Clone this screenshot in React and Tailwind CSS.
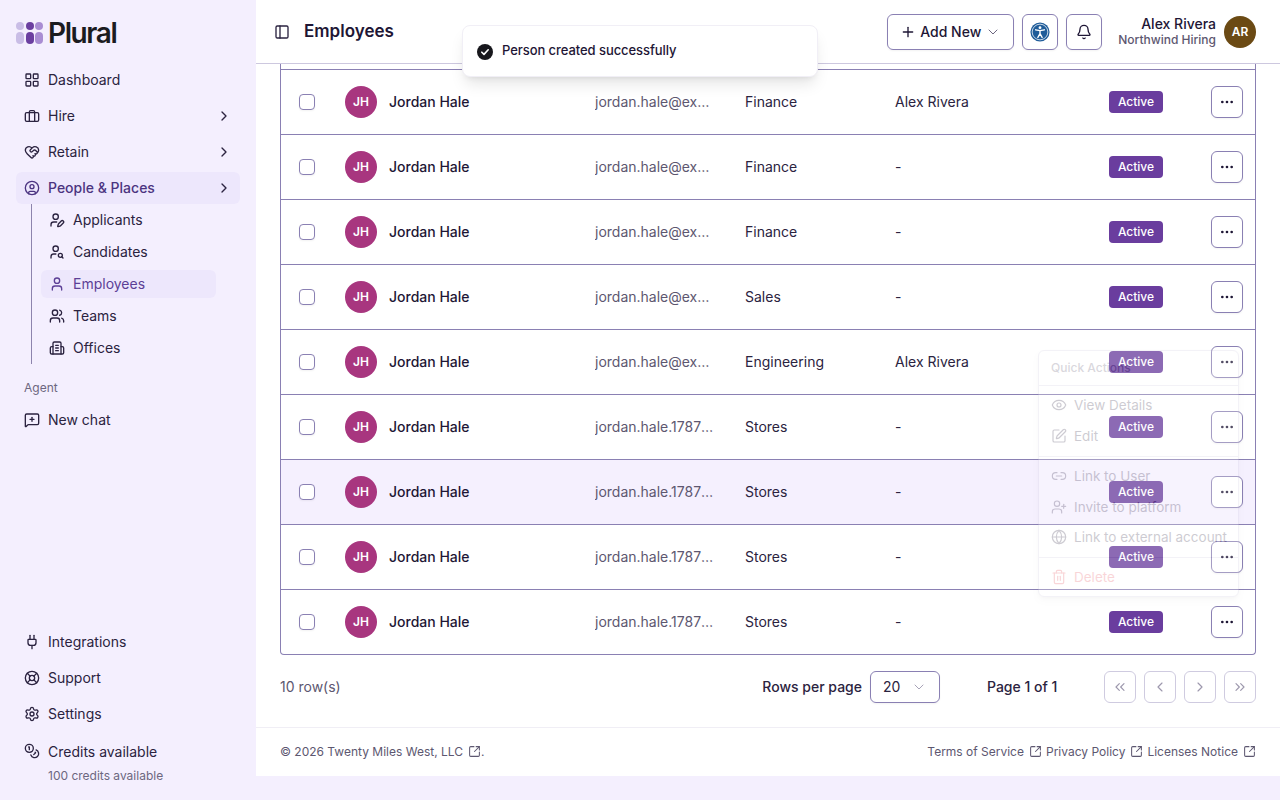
import React from "react";
import {
  LayoutGrid, HeartHandshake, CircleUser, ChevronRight, ChevronLeft, ChevronsLeft, ChevronsRight, UserPen, UserSearch, User, Users,
  MessageSquarePlus, Plug, LifeBuoy, Settings, PanelLeft, Plus, ChevronDown, Bell, Ellipsis, SquareArrowOutUpRight,
  Eye, SquarePen, Link2, UserPlus, Globe, Trash2, Coins,
} from "lucide-react";

const Suitcase = (p) => (
  <svg viewBox="0 0 24 24" fill="none" stroke="currentColor" strokeWidth="2" strokeLinecap="round" strokeLinejoin="round" {...p}>
    <path d="M16 20V6a2 2 0 0 0-2-2h-4a2 2 0 0 0-2 2v14" />
    <rect x="2" y="7" width="20" height="13" rx="2" />
  </svg>
);
const OfficeIcon = (p) => (
  <svg viewBox="0 0 24 24" fill="none" stroke="currentColor" strokeWidth="2" strokeLinecap="round" strokeLinejoin="round" {...p}>
    <path d="M6 21V5a2 2 0 0 1 2-2h8a2 2 0 0 1 2 2v16" />
    <path d="M6 10H4a2 2 0 0 0-2 2v7a2 2 0 0 0 2 2h16a2 2 0 0 0 2-2v-7a2 2 0 0 0-2-2h-2" />
    <path d="M10 8h4M10 12h4M10 16h4" />
  </svg>
);

const Logo = () => (
  <div className="flex items-center h-7 gap-[1.5px]">
    <div className="flex flex-col items-center gap-[2px]">
      <span className="w-2 h-2 rounded-full bg-[#c9bde6]" />
      <span className="w-2 h-3 rounded-full bg-[#c9bde6]" />
    </div>
    <div className="flex flex-col items-center gap-[2px]">
      <span className="w-2 h-2 rounded-full bg-[#6b3fa0]" />
      <span className="w-2 h-3 rounded-full bg-[#6b3fa0]" />
    </div>
    <div className="flex flex-col items-center gap-[2px]">
      <span className="w-2 h-2 rounded-full bg-[#a98dd3]" />
      <span className="w-2 h-3 rounded-full bg-[#a98dd3]" />
    </div>
    <span className="ml-[3.5px] text-[28px] leading-none font-semibold tracking-[-0.05em] text-[#1b1b1f]">Plural</span>
  </div>
);

const NavItem = ({ icon: I, label, chevron, active }) => (
  <div className={`flex items-center h-8 px-2 gap-2 rounded-md text-sm ${active ? "bg-[#ede7fc] text-[#4b3480] font-medium" : "text-[#2b2340]"}`}>
    <I className="w-4 h-4 shrink-0" strokeWidth={2} />
    <span className="flex-1">{label}</span>
    {chevron && <ChevronRight className="w-4 h-4 text-[#2b2340]" />}
  </div>
);

const SubItem = ({ icon: I, label, active }) => (
  <div className={`flex items-center h-7 px-2 gap-2 rounded-md text-sm ${active ? "bg-[#ede7fc] text-[#5c3f96]" : "text-[#2b2340]"}`}>
    <I className="w-4 h-4 shrink-0" strokeWidth={2} />
    <span>{label}</span>
  </div>
);

const Sidebar = () => (
  <aside className="w-64 h-[800px] shrink-0 bg-[#f4effe] flex flex-col px-4 pt-[19px]">
    <Logo />
    <nav className="mt-[17px] flex flex-col gap-1">
      <NavItem icon={LayoutGrid} label="Dashboard" />
      <NavItem icon={Suitcase} label="Hire" chevron />
      <NavItem icon={HeartHandshake} label="Retain" chevron />
      <NavItem icon={CircleUser} label="People & Places" chevron active />
    </nav>
    <div className="ml-[15px] mr-6 border-l border-[#8d84ad] pl-[9px] pb-[1px] flex flex-col gap-1 pt-[2px] h-[160px]">
      <SubItem icon={UserPen} label="Applicants" />
      <SubItem icon={UserSearch} label="Candidates" />
      <SubItem icon={User} label="Employees" active />
      <SubItem icon={Users} label="Teams" />
      <SubItem icon={OfficeIcon} label="Offices" />
    </div>
    <div className="mt-4 px-2 text-xs leading-4 text-[#6d6780]">Agent</div>
    <div className="mt-2"><NavItem icon={MessageSquarePlus} label="New chat" /></div>
    <div className="mt-auto flex flex-col gap-1">
      <NavItem icon={Plug} label="Integrations" />
      <NavItem icon={LifeBuoy} label="Support" />
      <NavItem icon={Settings} label="Settings" />
    </div>
    <div className="mt-3 mb-[16px] px-2 flex gap-2 text-[#2b2340]">
      <Coins className="w-4 h-4 shrink-0 mt-[1px]" />
      <div className="flex flex-col">
        <span className="text-sm leading-5">Credits available</span>
        <span className="text-xs leading-4 mt-[6px] text-[#6d6780]">100 credits available</span>
      </div>
    </div>
  </aside>
);

const A11yIcon = () => (
  <svg viewBox="0 0 24 24" className="w-5 h-5">
    <circle cx="12" cy="12" r="11.5" fill="#1f5c99" />
    <circle cx="12" cy="12" r="9.4" fill="none" stroke="#fff" strokeWidth="0.9" />
    <circle cx="12" cy="6.8" r="1.7" fill="#fff" />
    <path d="M6.8 9.4 12 10.4l5.2-1M12 10.4V14M12 14l-2.6 4.6M12 14l2.6 4.6" stroke="#fff" strokeWidth="1.7" strokeLinecap="round" strokeLinejoin="round" fill="none" />
  </svg>
);

const Header = () => (
  <header className="h-16 shrink-0 border-b border-[#cdc8df] flex items-center pl-[18px] pr-6 bg-white">
    <PanelLeft className="w-4 h-4 text-[#2b2340]" />
    <h1 className="ml-[14px] mt-px text-[17px] font-semibold text-[#1e1635]">Employees</h1>
    <div className="ml-auto flex items-center gap-2">
      <button className="h-9 w-[127px] rounded-md border border-[#8a80b3] flex items-center justify-center gap-1 text-sm font-medium text-[#1e1635] shadow-xs">
        <Plus className="w-4 h-4" />
        Add New
        <ChevronDown className="w-4 h-4 text-[#6d6780]" strokeWidth={1.5} />
      </button>
      <button className="w-9 h-9 rounded-md border border-[#8a80b3] flex items-center justify-center shadow-xs"><A11yIcon /></button>
      <button className="w-9 h-9 rounded-md border border-[#8a80b3] flex items-center justify-center shadow-xs"><Bell className="w-4 h-4 text-[#1e1635]" /></button>
    </div>
    <div className="ml-4 flex flex-col items-end">
      <span className="text-sm leading-4 font-medium text-[#1e1635]">Alex Rivera</span>
      <span className="text-xs leading-4 font-medium text-[#5d5770]">Northwind Hiring</span>
    </div>
    <div className="ml-2 w-8 h-8 rounded-full bg-[#6b4a14] text-white text-xs font-semibold flex items-center justify-center">AR</div>
  </header>
);

const people = [
  ["jordan.hale@example.com", "Finance", "Alex Rivera"],
  ["jordan.hale@example.com", "Finance", "-"],
  ["jordan.hale@example.com", "Finance", "-"],
  ["jordan.hale@example.com", "Sales", "-"],
  ["jordan.hale@example.com", "Engineering", "Alex Rivera"],
  ["jordan.hale.1787@example.com", "Stores", "-"],
  ["jordan.hale.1787@example.com", "Stores", "-"],
  ["jordan.hale.1787@example.com", "Stores", "-"],
  ["jordan.hale.1787@example.com", "Stores", "-"],
];

const Row = ({ email, dept, manager, hover, last }) => (
  <div className={`grid grid-cols-[64px_250px_150px_150px_214px_102px_1fr] items-center text-sm text-[#2b2340] ${last ? "h-16" : "h-[65px] border-b border-[#8a80b3]"} ${hover ? "bg-[#f5f0fe]" : ""}`}>
    <div className="pl-[18px] flex"><span className="w-4 h-4 rounded-[4px] border border-[#8a80b3] bg-white shadow-xs" /></div>
    <div className="flex items-center gap-3">
      <span className="w-8 h-8 rounded-full bg-[#a8367f] text-white text-xs font-semibold flex items-center justify-center">JH</span>
      <span className="font-medium text-[#1e1635]">Jordan Hale</span>
    </div>
    <div className="truncate w-[120px] text-[#5d5770]">{email}</div>
    <div>{dept}</div>
    <div>{manager}</div>
    <div>
      <span className="h-[22px] w-[54px] rounded-[4px] bg-[#6a3d9e] text-white text-xs font-medium flex items-center justify-center">Active</span>
    </div>
    <div className="flex">
      <button className="w-8 h-8 rounded-md border border-[#8a80b3] bg-white flex items-center justify-center shadow-xs"><Ellipsis className="w-4 h-4 text-[#1e1635]" /></button>
    </div>
  </div>
);

const PageBtn = ({ icon: I }) => (
  <button className="w-8 h-8 rounded-md border border-[#cfcbe0] flex items-center justify-center text-[#9d98ad]"><I className="w-4 h-4" strokeWidth={1.75} /></button>
);

const Ext = () => <SquareArrowOutUpRight className="w-[13px] h-[13px] inline-block ml-[5px] -mt-[2px]" strokeWidth={1.9} />;

const MenuRow = ({ icon: I, label, red }) => (
  <div className={`h-[30.5px] flex items-center gap-[7px] px-3 text-[13.5px] whitespace-nowrap ${red ? "text-[#e7505a]" : "text-[#2b2340]"}`}>
    <I className="w-4 h-4 shrink-0" strokeWidth={1.75} />
    <span>{label}</span>
  </div>
);

const Menu = () => (
  <div className="absolute left-[1038px] top-[350px] w-[201px] h-[247px] rounded-md border border-[#cdc8df] bg-white shadow-md opacity-[0.23] z-10">
    <div className="h-[35px] px-3 flex items-center text-xs font-medium text-[#5d5770] border-b border-[#cdc8df]">Quick Actions</div>
    <div className="pt-1"><MenuRow icon={Eye} label="View Details" /><MenuRow icon={SquarePen} label="Edit" /></div>
    <div className="border-t border-[#cdc8df] mt-[5px] pt-1"><MenuRow icon={Link2} label="Link to User" /><MenuRow icon={UserPlus} label="Invite to platform" /><MenuRow icon={Globe} label="Link to external account" /></div>
    <div className="border-t border-[#cdc8df] mt-1 pt-1"><MenuRow icon={Trash2} label="Delete" red /></div>
  </div>
);

const Toast = () => (
  <div className="absolute left-[462px] top-[25px] w-[356px] h-[52px] rounded-lg border border-[#f1eff6] bg-white shadow-lg flex items-center px-[14px] gap-[9px] z-20">
    <svg viewBox="0 0 16 16" className="w-4 h-4 mt-[1px]">
      <circle cx="8" cy="8" r="8" fill="#17171c" />
      <path d="m4.8 8.2 2.2 2.2 4.2-4.6" fill="none" stroke="#fff" strokeWidth="1.6" strokeLinecap="round" strokeLinejoin="round" />
    </svg>
    <span className="text-[13px] font-medium tracking-[-0.005em] text-[#1e1635]">Person created successfully</span>
  </div>
);

export default function App() {
  return (
    <div className="relative flex w-[1280px] h-[800px] overflow-hidden bg-[#f4effe]" style={{ fontFamily: "Inter, sans-serif" }}>
      <Sidebar />
      <main className="flex-1 h-[776px] bg-white flex flex-col">
        <Header />
        <div className="px-6">
          <div className="border-x border-b border-[#8a80b3] rounded-b-[4px] overflow-hidden">
            <div className="h-[6px] border-b border-[#8a80b3]" />
            {people.map((p, i) => (
              <Row key={i} email={p[0]} dept={p[1]} manager={p[2]} hover={i === 6} last={i === people.length - 1} />
            ))}
          </div>
          <div className="h-8 mt-4 flex items-center text-sm">
            <span className="text-[#5d5770]">10 row(s)</span>
            <div className="ml-auto flex items-center">
              <span className="font-medium text-[#2b2340]">Rows per page</span>
              <div className="ml-2 w-[70px] h-8 rounded-md border border-[#8a80b3] flex items-center justify-between px-3 text-[#2b2340] shadow-xs">
                20
                <ChevronDown className="w-4 h-4 text-[#a8a3b8]" strokeWidth={1.5} />
              </div>
              <span className="ml-[47px] w-[117px] font-medium text-[#2b2340]">Page 1 of 1</span>
              <div className="flex gap-2">
                <PageBtn icon={ChevronsLeft} /><PageBtn icon={ChevronLeft} /><PageBtn icon={ChevronRight} /><PageBtn icon={ChevronsRight} />
              </div>
            </div>
          </div>
        </div>
        <footer className="mt-auto h-[49px] border-t border-[#f0eef5] px-6 flex items-center justify-between text-xs text-[#5d5770]">
          <span>© 2026 Twenty Miles West, LLC<Ext />.</span>
          <span className="flex gap-1"><span>Terms of Service<Ext /></span><span>Privacy Policy<Ext /></span><span>Licenses Notice<Ext /></span></span>
        </footer>
      </main>
      <Menu />
      <Toast />
    </div>
  );
}
